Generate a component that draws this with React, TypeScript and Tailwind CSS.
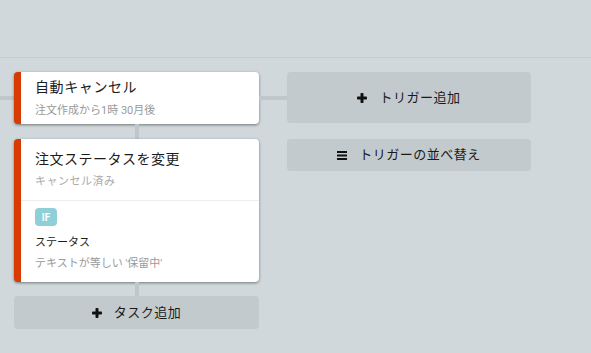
function PlusIcon() {
  return (
    <svg width="10" height="10" viewBox="0 0 10 10" className="shrink-0">
      <rect x="3.5" y="0" width="3" height="10" rx="0.8" fill="#111" />
      <rect x="0" y="3.5" width="10" height="3" rx="0.8" fill="#111" />
    </svg>
  );
}

function BarsIcon() {
  return (
    <svg width="10" height="9" viewBox="0 0 10 9" className="shrink-0">
      <rect x="0" y="0" width="10" height="2" fill="#111" />
      <rect x="0" y="3.5" width="10" height="2" fill="#111" />
      <rect x="0" y="7" width="10" height="2" fill="#111" />
    </svg>
  );
}

function GrayButton({
  icon,
  label,
  className,
}: {
  icon: React.ReactNode;
  label: string;
  className: string;
}) {
  return (
    <button
      className={`flex items-center justify-center gap-[12px] rounded-[4px] bg-[#c3cacd] text-[13px] tracking-[0.5px] text-[#1a1a1a] ${className}`}
    >
      {icon}
      <span>{label}</span>
    </button>
  );
}

export default function App() {
  return (
    <div
      className="h-[353px] w-[591px] overflow-hidden bg-[#d0d8db]"
      style={{ fontFamily: 'Roboto, "Noto Sans CJK JP", sans-serif' }}
    >
      <div className="h-[58px] border-b border-[#c5cdd0]" />
      <div className="flex items-start pt-[14px]">
        {/* tasks column */}
        <div className="flex flex-col">
          <div className="flex items-center">
            <div className="h-[4px] w-[14px] bg-[#c0c7ca]" />
            <div className="w-[245px] rounded-[4px] border-l-[7px] border-[#d83b01] bg-white pb-[5px] pl-[14px] pt-[5px] shadow-[0_1px_3px_rgba(0,0,0,0.45)]">
              <div className="text-[14px] leading-[20px] tracking-[0.6px] text-[#1c1c1c]">
                自動キャンセル
              </div>
              <div className="mt-[6px] text-[11px] leading-[16px] text-[#9a9a9a]">
                注文作成から1時 30月後
              </div>
            </div>
            <div className="h-[4px] w-[28px] bg-[#c0c7ca]" />
          </div>
          <div className="ml-[14px] flex w-[245px] justify-center">
            <div className="h-[15px] w-[4px] bg-[#c0c7ca]" />
          </div>
          <div className="ml-[14px] w-[245px] rounded-[4px] border-l-[7px] border-[#d83b01] bg-white shadow-[0_1px_3px_rgba(0,0,0,0.45)]">
            <div className="border-b border-[#eeeeee] pb-[10px] pl-[14px] pt-[10px]">
              <div className="text-[14px] leading-[20px] tracking-[0.5px] text-[#1c1c1c]">
                注文ステータスを変更
              </div>
              <div className="mt-[5px] text-[11px] leading-[16px] tracking-[0.5px] text-[#ababab]">
                キャンセル済み
              </div>
            </div>
            <div className="pb-[10px] pl-[14px] pt-[7px]">
              <div className="flex h-[18px] w-[22px] items-center justify-center rounded-[4px] bg-[#8ecfd8] text-[10px] font-bold text-white">
                IF
              </div>
              <div className="mt-[9px] text-[11px] leading-[16px] text-[#1c1c1c]">
                ステータス
              </div>
              <div className="mt-[5px] text-[11px] leading-[16px] text-[#9a9a9a]">
                テキストが等しい '保留中'
              </div>
            </div>
          </div>
          <div className="ml-[14px] flex w-[245px] justify-center">
            <div className="h-[14px] w-[4px] bg-[#c0c7ca]" />
          </div>
          <GrayButton
            icon={<PlusIcon />}
            label="タスク追加"
            className="ml-[14px] h-[33px] w-[245px]"
          />
        </div>
        {/* triggers column */}
        <div className="flex flex-col gap-[16px]">
          <GrayButton icon={<PlusIcon />} label="トリガー追加" className="h-[51px] w-[244px]" />
          <GrayButton icon={<BarsIcon />} label="トリガーの並べ替え" className="h-[32px] w-[244px]" />
        </div>
      </div>
    </div>
  );
}
